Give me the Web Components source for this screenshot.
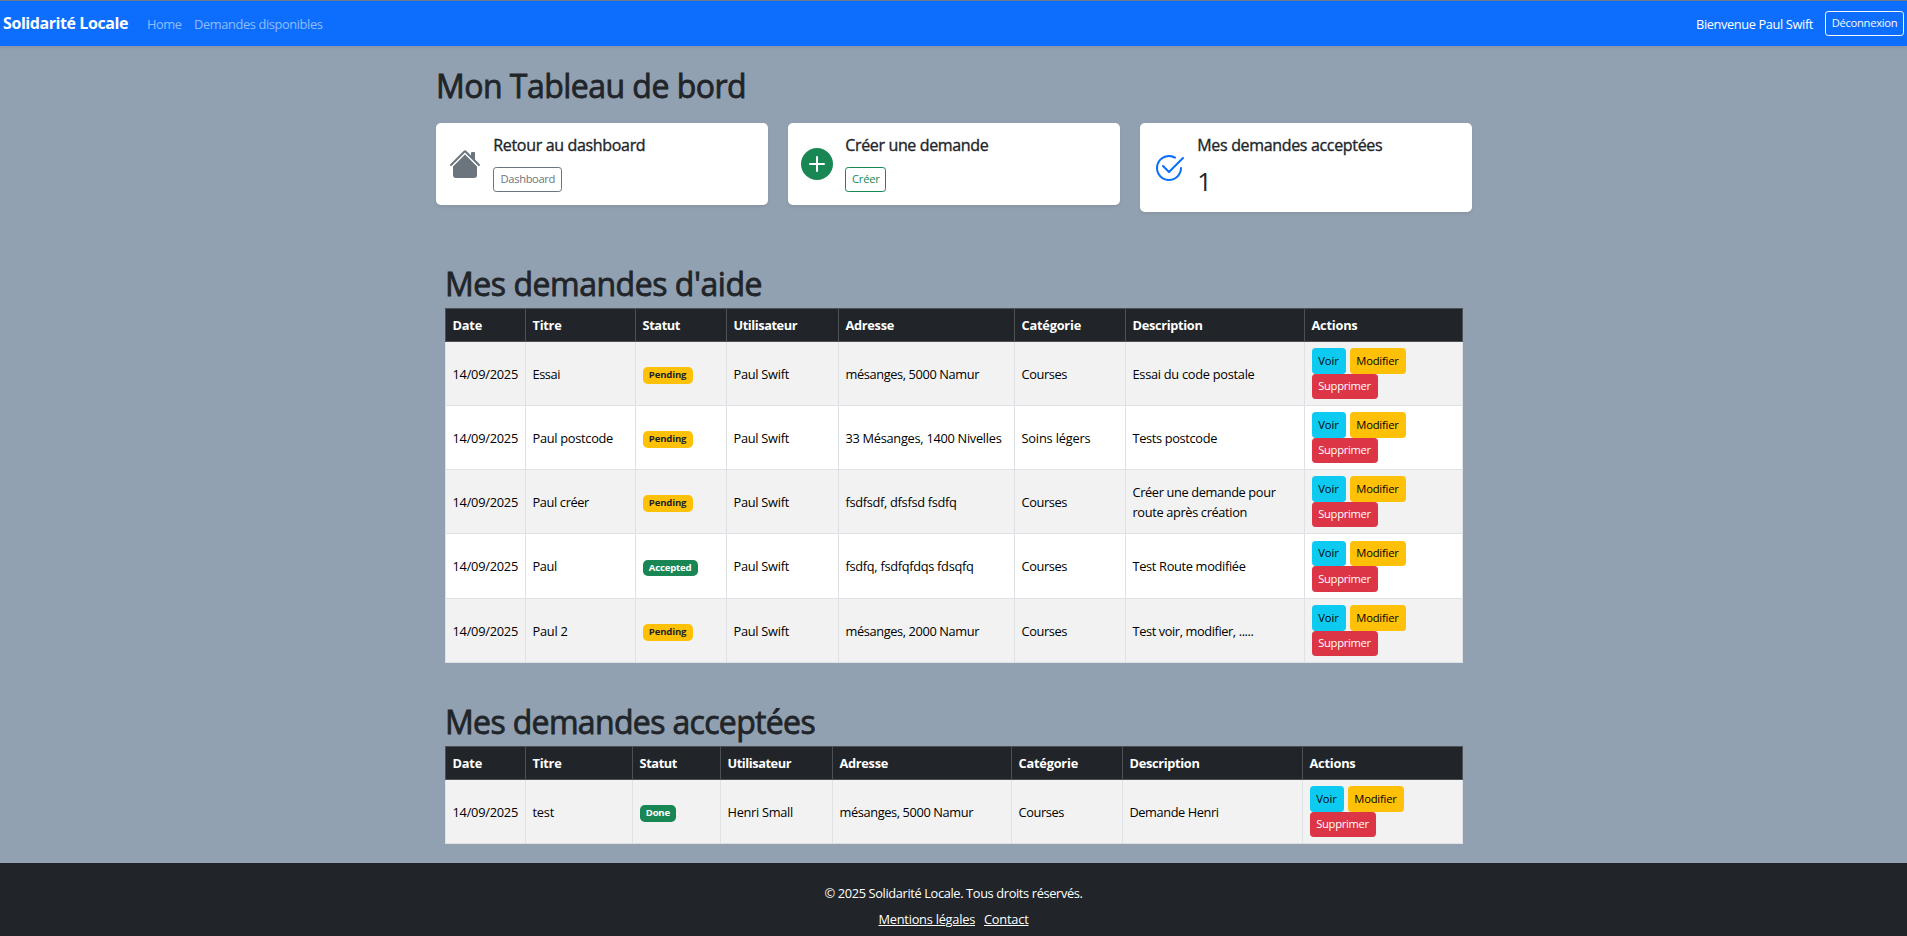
<!DOCTYPE html>
<html lang="fr">
<head>
<meta charset="utf-8">
<title>Solidarité Locale</title>
<style>
html,body{margin:0;height:100%}
body{background:#92a1b1;color:#212529;font:400 12.8px/19.2px "Open Sans","Noto Sans",sans-serif;overflow:hidden}
</style>
</head>
<body>
<app-page></app-page>
<script>
const define=(name,html,setup)=>customElements.define(name,class extends HTMLElement{
  connectedCallback(){
    if(this.shadowRoot)return;
    const root=this.attachShadow({mode:'open'});
    root.innerHTML=typeof html==='function'?html(this):html;
    if(setup)setup(this,root);
  }
});
const T=(text,w)=>`<fit-text w="${w}">${text}</fit-text>`;

define('app-page',`<style>
:host{display:flex;flex-direction:column;height:936px}
main{flex:none;height:817px;width:1036px;margin-left:436px;display:flex;flex-direction:column}
.cards{display:grid;grid-template-columns:repeat(3,332px);column-gap:20px;align-items:start;height:89px;margin-top:18px}
.top{margin-top:21px}
.zone{margin:53px 9px 0}
.zone + .zone{margin-top:40px}
</style>
<nav-bar></nav-bar>
<main>
<page-title class="top">${T('Mon Tableau de bord',310)}</page-title>
<div class="cards">
<dash-card icon="house"><span slot="title">${T('Retour au dashboard',152)}</span><ui-button kind="outline-secondary" style="width:69px">${T('Dashboard',54.5)}</ui-button></dash-card>
<dash-card icon="plus"><span slot="title">${T('Créer une demande',143)}</span><ui-button kind="outline-success" style="width:41px">${T('Créer',27.5)}</ui-button></dash-card>
<dash-card icon="check"><span slot="title">${T('Mes demandes acceptées',185)}</span><count-value>1</count-value></dash-card>
</div>
<section class="zone"><page-title>${T("Mes demandes d'aide",317)}</page-title><request-table source="mine"></request-table></section>
<section class="zone"><page-title>${T('Mes demandes acceptées',370)}</page-title><request-table source="accepted"></request-table></section>
</main>
<site-footer></site-footer>`);

define('nav-bar',`<style>
:host{display:flex;align-items:center;box-sizing:border-box;flex:none;height:46px;background:#0d6efd;border-top:1px solid #6c7b8b;padding:1px 3px 0;box-shadow:0 1.6px 3.2px rgba(0,0,0,.075);color:#fff}
.brand{font-size:16px;font-weight:700;margin-right:19px}
.link{color:rgba(255,255,255,.55);margin-right:12.5px}
.link,.user{padding-top:2px}
.user{margin-left:auto;margin-right:12px}
ui-button{margin-bottom:2px}
</style><span class="brand">${T('Solidarité Locale',125)}</span>
<span class="link">${T('Home',34.5)}</span><span class="link">${T('Demandes disponibles',128.5)}</span>
<span class="user">${T('Bienvenue Paul Swift',117)}</span><ui-button kind="outline-light" style="width:79px">${T('Déconnexion',65.5)}</ui-button>`);

define('page-title',`<style>:host{display:block;font-size:32px;font-weight:500;line-height:38px;height:38px;-webkit-text-stroke:.8px currentColor}</style><slot></slot>`);
define('count-value',`<style>:host{display:block;font-size:25.6px;line-height:38px;font-weight:400;margin:-4px 0 -2px}</style><slot></slot>`);

const icons={
house:['#6c757d','M8.707 1.5a1 1 0 0 0-1.414 0L.646 8.146a.5.5 0 0 0 .708.708L8 2.207l6.646 6.647a.5.5 0 0 0 .708-.708L13 5.793V2.5a.5.5 0 0 0-.5-.5h-1a.5.5 0 0 0-.5.5v1.293z','m8 3.293 6 6V13.5a1.5 1.5 0 0 1-1.5 1.5h-9A1.5 1.5 0 0 1 2 13.5V9.293z'],
plus:['#198754','M16 8A8 8 0 1 1 0 8a8 8 0 0 1 16 0M8.5 4.5a.5.5 0 0 0-1 0v3h-3a.5.5 0 0 0 0 1h3v3a.5.5 0 0 0 1 0v-3h3a.5.5 0 0 0 0-1h-3z'],
check:['#0d6efd','M2.5 8a5.5 5.5 0 0 1 8.25-4.764.5.5 0 0 0 .5-.866A6.5 6.5 0 1 0 14.5 8a.5.5 0 0 0-1 0 5.5 5.5 0 1 1-11 0','M15.354 3.354a.5.5 0 0 0-.708-.708L8 9.293 5.354 6.646a.5.5 0 1 0-.708.708l3 3a.5.5 0 0 0 .708 0z']
};
define('bs-icon',el=>{
  const [fill,...paths]=icons[el.getAttribute('name')];
  return `<style>:host{display:block;width:32px;height:32px}svg{display:block}</style><svg width="32" height="32" viewBox="0 0 16 16" fill="${fill}">${paths.map(d=>`<path d="${d}"/>`).join('')}</svg>`;
});
define('dash-card',el=>`<style>
:host{display:flex;align-items:center;background:#fff;border-radius:4.8px;box-sizing:border-box;padding:12.5px;box-shadow:0 1.6px 3.2px rgba(0,0,0,.075)}
bs-icon{margin:1px 12.8px 0 0}
.title{font-size:16px;font-weight:500;line-height:19.2px;margin-bottom:12.6px;-webkit-text-stroke:.35px currentColor}
</style><bs-icon name="${el.getAttribute('icon')}"></bs-icon><div><div class="title"><slot name="title"></slot></div><slot></slot></div>`);

const kinds={
'outline-secondary':'color:#6c757d;border-color:#6c757d','outline-success':'color:#198754;border-color:#198754','outline-light':'color:#f8f9fa;border-color:#f8f9fa',
info:'color:#000;background:#0dcaf0;border-color:#0dcaf0',warning:'color:#000;background:#ffc107;border-color:#ffc107',danger:'color:#fff;background:#dc3545;border-color:#dc3545'
};
define('ui-button',el=>`<style>
:host{display:flex;justify-content:center;align-items:center;box-sizing:border-box;height:25px;border:1px solid;border-radius:3.2px;font-size:11.2px;line-height:16.8px;${kinds[el.getAttribute('kind')]}}
</style><slot></slot>`);
define('status-badge',el=>`<style>
:host{display:inline-block;box-sizing:border-box;height:16.5px;padding:0 6.3px;border-radius:4.8px;font-size:9.6px;line-height:16.5px;font-weight:700;vertical-align:middle;
${el.getAttribute('kind')==='pending'?'background:#ffc107;color:#212529':'background:#198754;color:#fff'}}
</style><slot></slot>`);

define('row-actions',`<style>
:host{display:flex;flex-direction:column;align-items:flex-start;margin-top:.5px}
div{display:flex;gap:4px}
ui-button{height:25.5px}
</style><div><ui-button kind="info" style="width:34px">${T('Voir',20.5)}</ui-button><ui-button kind="warning" style="width:56px">${T('Modifier',42.5)}</ui-button></div><ui-button kind="danger" style="width:66px">${T('Supprimer',52.5)}</ui-button>`);

const date=['14/09/2025',65.5],paul=['Paul Swift',55.5],courses=['Courses',45.5];
const tables={
mine:{cols:[80,110,91,112,176,111,179,158],rows:[
[64,['Essai',27.5],'pending',paul,['mésanges, 5000 Namur',133.5],courses,[['Essai du code postale',122]]],
[64,['Paul postcode',80.5],'pending',paul,['33 Mésanges, 1400 Nivelles',156],['Soins légers',69],[['Tests postcode',84.5]]],
[64,['Paul créer',56.5],'pending',paul,['fsdfsdf, dfsfsd fsdfq',111],courses,[['Créer une demande pour',143],['route après création',114.5]]],
[65,['Paul',24.5],'accepted',paul,['fsdfq, fsdfqfdqs fdsqfq',128],courses,[['Test Route modifiée',113]]],
[64,['Paul 2',35],'pending',paul,['mésanges, 2000 Namur',133.5],courses,[['Test voir, modifier, .....',121]]]]},
accepted:{cols:[80,107,88,112,179,111,180,160],rows:[
[64,['test',21.5],'done',['Henri Small',65.5],['mésanges, 5000 Namur',133.5],courses,[['Demande Henri',89]]]]}
};
const badges={pending:['Pending',37.5],accepted:['Accepted',42.5],done:['Done',24]};
const heads=[['Date',29.5],['Titre',29],['Statut',37.5],['Utilisateur',63.5],['Adresse',48.5],['Catégorie',59.5],['Description',70],['Actions',46]];
define('request-table',el=>{
  const {cols,rows}=tables[el.getAttribute('source')];
  const cell=t=>`<td>${T(...t)}</td>`;
  return `<style>
:host{display:block;margin-top:5px}
table{border-collapse:collapse;table-layout:fixed;width:1018px;color:#000}
th,td{box-sizing:border-box;padding:2px 6.5px 0;text-align:left;vertical-align:middle;border:1px solid #dee2e6}
td:last-child{padding-top:0}
th{background:#212529;color:#fff;border-color:#4d5154;font-weight:700}
td{background:#fff}
tbody tr:nth-child(odd) td{background:#f2f2f2}
.head{height:33px}
.line{display:block}
</style><table><colgroup>${cols.map(w=>`<col style="width:${w}px">`).join('')}</colgroup>
<thead><tr class="head">${heads.map(h=>`<th>${T(...h)}</th>`).join('')}</tr></thead>
<tbody>${rows.map(([h,title,status,user,address,category,desc])=>`<tr style="height:${h}px">${cell(date)}${cell(title)}<td><status-badge kind="${status}">${T(...badges[status])}</status-badge></td>${cell(user)}${cell(address)}${cell(category)}<td>${desc.map(d=>`<span class="line">${T(...d)}</span>`).join('')}</td><td><row-actions></row-actions></td></tr>`).join('')}</tbody></table>`;
});

define('site-footer',`<style>
:host{display:block;flex:1;background:#212529;color:#fff;padding-top:21px;box-sizing:border-box;text-align:center}
.links{display:flex;justify-content:center;gap:9px;margin-top:7px}
a{color:#fff;text-decoration:underline}
</style><div>${T('© 2025 Solidarité Locale. Tous droits réservés.',258)}</div><div class="links"><a>${T('Mentions légales',96.5)}</a><a>${T('Contact',44.5)}</a></div>`);

// Sets one run of text to a given width by spreading the difference over its letters.
customElements.define('fit-text',class extends HTMLElement{
  connectedCallback(){
    if(this.shadowRoot)return;
    this.attachShadow({mode:'open'}).innerHTML='<style>:host{display:inline-block;white-space:nowrap;text-decoration:inherit}</style><slot></slot>';
    const w=+this.getAttribute('w'),n=this.textContent.length;
    this.style.letterSpacing=((w-this.getBoundingClientRect().width)/n).toFixed(3)+'px';
    this.style.width=w+'px';
  }
});
</script>
</body>
</html>
